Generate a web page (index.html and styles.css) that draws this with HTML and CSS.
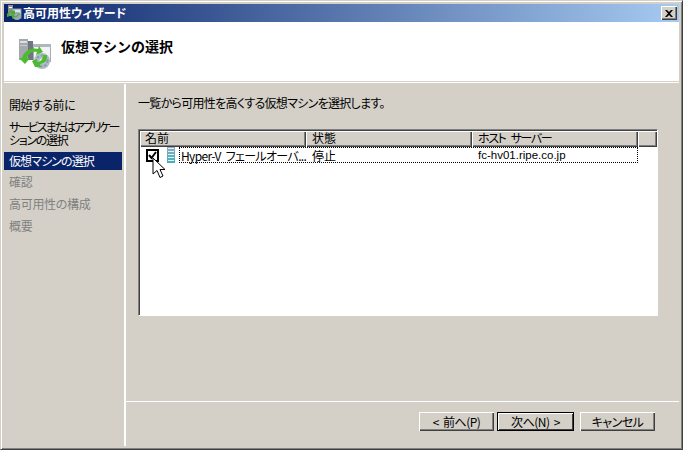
FILE: index.html
```html
<!DOCTYPE html>
<html lang="ja">
<head>
<meta charset="utf-8">
<title>高可用性ウィザード</title>
<link rel="stylesheet" href="styles.css">
</head>
<body>
<div class="window">
  <div class="titlebar">
    <svg class="title-icon" width="16" height="16" viewBox="0 0 16 16"><rect x="2" y="0" width="5" height="11" fill="#8a9096"/><rect x="3" y="2" width="3" height="1" fill="#fff"/><rect x="7" y="4" width="8" height="9" fill="#dfe3e8" stroke="#8a9aa8"/><circle cx="11" cy="11" r="4" fill="#9aa8b4"/><path d="M1 9c2-3 5-4 7-3l1-1v4H5l1-1c-2-1-3 0-3 1l1 2-3 1zM14 8c-1 3-4 5-6 4l-1 2-2-4 4-1-1 2c2 1 4-1 5-3z" fill="#43b02a"/></svg>
    <span class="title-text">高可用性ウィザード</span>
    <span class="close"><svg width="8" height="7" viewBox="0 0 8 7"><path d="M0 0h2l2 2 2-2h2L5 3.500 8 7H6L4 5 2 7H0l3-3.500z" fill="#000"/></svg></span>
  </div>
  <div class="header">
    <svg class="header-icon" width="34" height="32" viewBox="0 0 34 32">
      <rect x="1" y="1" width="9" height="21" fill="#a3a9ae"/><rect x="2" y="3" width="7" height="2" fill="#dcdfe2"/><rect x="2" y="7" width="7" height="1" fill="#c9cdd0"/><rect x="10" y="3" width="5" height="19" fill="#70777c"/>
      <rect x="15.500" y="6.500" width="17" height="17" fill="#f1f3f4" stroke="#a5adb4"/><rect x="15" y="6" width="18" height="3" fill="#aeb7be"/>
      <circle cx="24" cy="23" r="8" fill="#aebbc6"/><circle cx="24" cy="23" r="5.500" fill="none" stroke="#8b9aa7" stroke-width="2" stroke-dasharray="2 2"/><circle cx="24" cy="23" r="2.500" fill="#eef1f3"/>
      <path d="M4 20c2-7 9-11 16-9l1-3 4 6-7 3 1-3c-5-1-9 2-10 6l3 0-5 6-6-6z" fill="#4dbb2f"/>
      <path d="M29 17c1 5-3 9-7 9l1 3-6 0-3-6 5-2 0 3c4 0 6-3 6-7z" fill="#4dbb2f"/>
    </svg>
    <h1 class="header-title">仮想マシンの選択</h1>
  </div>
  <div class="body">
    <nav class="side">
      <div class="step step-first">開始する前に</div>
      <div class="step step-wrap"><span class="wrap-first">サービスまたはアプリケー</span><br>ションの選択</div>
      <div class="step step-active">仮想マシンの選択</div>
      <div class="step step-off">確認</div>
      <div class="step step-off">高可用性の構成</div>
      <div class="step step-off">概要</div>
    </nav>
    <main class="main">
      <div class="content">
        <p class="intro">一覧から可用性を高くする仮想マシンを選択します。</p>
        <div class="list">
          <div class="list-head">
            <div class="col col-a">名前</div>
            <div class="col col-b">状態</div>
            <div class="col col-c">ホスト サーバー</div>
            <div class="col col-d"></div>
          </div>
          <div class="row">
            <span class="check"><svg width="9" height="9" viewBox="0 0 9 9"><path d="M1 4l2.500 3L8 1" fill="none" stroke="#000" stroke-width="2"/></svg></span>
            <svg class="vm-icon" width="8" height="16" viewBox="0 0 8 16"><defs><linearGradient id="vm" x1="0" y1="0" x2="0" y2="1"><stop offset="0" stop-color="#8fa9c4"/><stop offset="1" stop-color="#3fb3b8"/></linearGradient></defs><rect width="8" height="16" fill="url(#vm)"/><path d="M1 1.500h6M1 4.500h6M1 7.500h6M1 10.500h6M1 13.500h6" stroke="#e4f2f6"/></svg>
            <div class="cells">
              <span class="cell cell-a">Hyper-V フェールオーバ...</span>
              <span class="cell cell-b">停止</span>
              <span class="cell cell-c">fc-hv01.ripe.co.jp</span>
            </div>
            <svg class="cursor" width="14" height="22" viewBox="0 0 14 22"><path d="M1 1v16l4-3.500 3 7 3-1.500-3-6.500h5z" fill="#fff" stroke="#000"/></svg>
          </div>
        </div>
      </div>
      <div class="footer">
        <button class="btn" type="button">&lt; 前へ(P)</button>
        <button class="btn btn-default" type="button">次へ(N) &gt;</button>
        <button class="btn btn-cancel" type="button">キャンセル</button>
      </div>
    </main>
  </div>
</div>
</body>
</html>
```

FILE: styles.css
```css
* { box-sizing: border-box; }
html, body { margin: 0; padding: 0; }
body {
  width: 683px;
  height: 450px;
  overflow: hidden;
  font-family: "Noto Sans CJK JP", "Liberation Sans", sans-serif;
  font-size: 12px;
  font-feature-settings: "palt";
  color: #000;
}
.window {
  width: 683px;
  height: 450px;
  display: flex;
  flex-direction: column;
  background: #d4d0c8;
  border-style: solid;
  border-width: 1px;
  border-color: #d4d0c8 #404040 #404040 #d4d0c8;
  box-shadow: inset 1px 1px 0 #fff, inset -1px -1px 0 #808080;
  padding: 3px 3px 2px 3px;
}
.titlebar {
  height: 18px;
  flex: none;
  display: flex;
  align-items: center;
  padding-left: 2px;
  padding-right: 2px;
  color: #fff;
  background: linear-gradient(to right, #0a246a, #a6caf0);
}
.title-icon { flex: none; margin-right: 1px; }
.title-text { font-weight: 700; flex: 1; line-height: 16px; }
.close {
  width: 16px;
  height: 14px;
  display: flex;
  align-items: center;
  justify-content: center;
  background: #d4d0c8;
  box-shadow: inset 1px 1px 0 #fff, inset -1px -1px 0 #404040, inset -2px -2px 0 #808080;
}
.header {
  height: 59px;
  flex: none;
  background: #fff;
  display: flex;
  align-items: flex-start;
  padding: 13px 0 0 14px;
}
.header-icon { flex: none; margin-right: 9px; margin-top: 3px; }
.header-title {
  margin: 2px 0 0;
  font-size: 14px;
  font-weight: 700;
  font-feature-settings: normal;
  line-height: 18px;
}
.body {
  flex: 1;
  display: flex;
  min-height: 0;
  margin-top: 1px;
  border-top: 1px solid #fff;
  padding-top: 1px;
}
.side {
  width: 122px;
  flex: none;
  border-right: 2px solid #fff;
  padding-top: 12px;
  margin-bottom: 1px;
}
.step {
  padding-left: 5px;
  line-height: 17px;
  height: 17px;
  margin-bottom: 5px;
  white-space: nowrap;
  letter-spacing: -0.500px;
}
.step-first { margin-bottom: 7px; }
.step-wrap {
  height: 26px;
  line-height: 13px;
  margin-bottom: 6px;
  letter-spacing: -1.300px;
}
.wrap-first { letter-spacing: -2.100px; }
.step-active {
  background: #0a246a;
  color: #fff;
  height: 18px;
  line-height: 18px;
  margin-right: 2px;
  margin-bottom: 3px;
  letter-spacing: -0.900px;
}
.step-off { color: #808080; letter-spacing: -0.300px; }
.main {
  flex: 1;
  min-width: 0;
  display: flex;
  flex-direction: column;
}
.content {
  flex: 1;
  min-height: 0;
  padding: 10px 21px 0 12px;
}
.intro { margin: 0 0 17px; line-height: 17px; height: 18px; letter-spacing: -0.700px; }
.list {
  width: 520px;
  height: 187px;
  background: #fff;
  border-top: 1px solid #808080;
  border-left: 1px solid #808080;
  border-right: 1px solid #fff;
  border-bottom: 1px solid #fff;
  box-shadow: inset 1px 1px 0 #404040;
  padding: 1px 0 0 1px;
}
.list-head { display: flex; height: 16px; background: #d4d0c8; }
.col {
  height: 16px;
  line-height: 14px;
  padding-left: 6px;
  background: #d4d0c8;
  box-shadow: inset 1px 1px 0 #fff, inset -1px -1px 0 #404040, inset -2px -2px 0 #808080;
  flex: none;
}
.col-a { width: 166px; padding-left: 5px; }
.col-b { width: 166px; }
.col-c { width: 166px; letter-spacing: -1.400px; word-spacing: 4px; }
.col-d { flex: 1; }
.row {
  position: relative;
  display: flex;
  align-items: flex-start;
  height: 17px;
  padding: 2px 0 0 6px;
}
.check {
  width: 13px;
  height: 13px;
  border: 2px solid #000;
  background: #fff;
  display: flex;
  align-items: center;
  justify-content: center;
  flex: none;
  margin-right: 8px;
}
.vm-icon { flex: none; margin: -2px 4px 0 0; }
.cells {
  display: flex;
  width: 459px;
  height: 16px;
  margin-top: -2px;
  border: 1px dotted #000;
  line-height: 15px;
  white-space: nowrap;
}
.cell { flex: none; padding-left: 1px; }
.cell-a { width: 131px; letter-spacing: -0.650px; word-spacing: 3px; }
.cell-b { width: 166px; }
.cell-c { width: 160px; font-family: "Liberation Sans", sans-serif; font-size: 11.500px; }
.cursor { position: absolute; left: 12px; top: 10px; }
.footer {
  height: 46px;
  flex: none;
  border-top: 1px solid #fff;
  display: flex;
  align-items: flex-start;
  padding: 10px 0 0 293px;
  gap: 6px;
}
.btn {
  width: 75px;
  height: 19px;
  padding: 0;
  border: 0;
  background: #d4d0c8;
  font: inherit;
  font-feature-settings: inherit;
  letter-spacing: -0.500px;
  word-spacing: 2px;
  line-height: 17px;
  color: #000;
  box-shadow: inset 1px 1px 0 #fff, inset -1px -1px 0 #404040, inset -2px -2px 0 #808080;
}
.btn-default {
  width: 77px;
  margin-left: -3px;
  outline: 1px solid #000;
  outline-offset: -1px;
  box-shadow: inset 2px 2px 0 #fff, inset -2px -2px 0 #404040;
}
```
